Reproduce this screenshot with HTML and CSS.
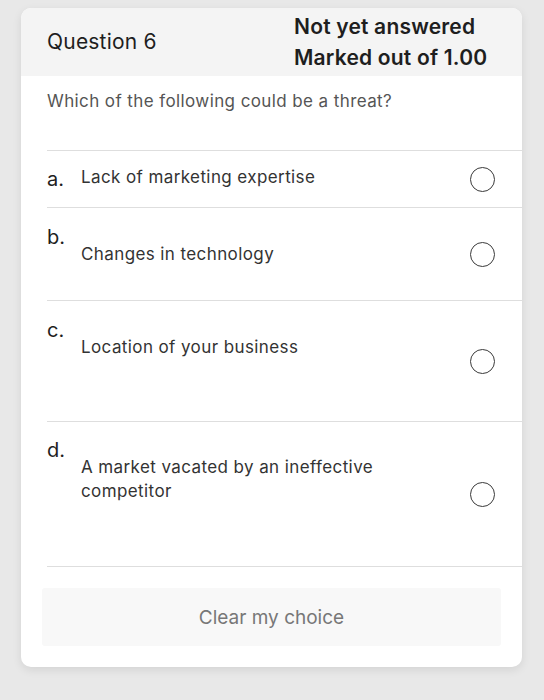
FILE: index.html
```html
<!DOCTYPE html>
<html lang="en">
<head>
<meta charset="utf-8">
<title>Question 6</title>
<link rel="stylesheet" href="styles.css">
</head>
<body>
<div class="card">
  <div class="card-header">
    <div class="q-title">Question 6</div>
    <div class="q-info">
      <div>Not yet answered</div>
      <div>Marked out of 1.00</div>
    </div>
  </div>
  <div class="q-text">Which of the following could be a threat?</div>
  <div class="answers">
    <div class="answer">
      <div class="answer-label inline answer-a">
        <span class="letter">a.</span>
        <span class="answer-text">Lack of marketing expertise</span>
      </div>
      <span class="radio"></span>
    </div>
    <div class="answer">
      <div class="answer-label answer-b">
        <div class="letter">b.</div>
        <div class="answer-text">Changes in technology</div>
      </div>
      <span class="radio"></span>
    </div>
    <div class="answer">
      <div class="answer-label answer-c">
        <div class="letter">c.</div>
        <div class="answer-text">Location of your business</div>
      </div>
      <span class="radio"></span>
    </div>
    <div class="answer">
      <div class="answer-label answer-d">
        <div class="letter">d.</div>
        <div class="answer-text">A market vacated by an ineffective competitor</div>
      </div>
      <span class="radio"></span>
    </div>
  </div>
  <div class="clear-btn">Clear my choice</div>
</div>
</body>
</html>
```

FILE: styles.css
```css
html, body {
  margin: 0;
  padding: 0;
  background: #e8e8e8;
  font-family: Inter, "Liberation Sans", Arial, sans-serif;
}

body {
  padding-top: 8px;
  padding-left: 21px;
  min-height: 700px;
  box-sizing: border-box;
}

.card {
  width: 501px;
  background: #ffffff;
  border-radius: 10px;
  overflow: hidden;
  box-shadow: 0 3px 10px rgba(0, 0, 0, 0.09);
  padding-bottom: 21px;
}

.card-header {
  background: #f4f4f4;
  height: 68px;
  display: grid;
  grid-template-columns: 247px 1fr;
  align-items: center;
  padding-left: 26px;
}

.q-title {
  font-size: 21px;
  letter-spacing: 0.2px;
  color: #1e1e1e;
  line-height: 24px;
}

.q-info {
  font-size: 21px;
  font-weight: 600;
  letter-spacing: 0.2px;
  color: #1e1e1e;
  line-height: 31px;
}

.q-text {
  font-size: 17px;
  letter-spacing: 0.4px;
  line-height: 24px;
  color: #555555;
  padding: 13px 26px 37px 26px;
}

.answers {
  margin-left: 26px;
  border-bottom: 1px solid #dedede;
}

.answer {
  border-top: 1px solid #dedede;
  display: flex;
  align-items: center;
  justify-content: space-between;
  padding-right: 27px;
}

.answer-label {
  flex: 1;
}

.answer-a { padding-top: 14px; padding-bottom: 14px; }
.answer-b { padding-top: 24px; padding-bottom: 34px; }
.answer-c { padding-top: 24px; padding-bottom: 62px; }
.answer-d { padding-top: 23px; padding-bottom: 63px; }

.answer-label.inline {
  display: flex;
  align-items: flex-start;
}

.letter {
  font-size: 20px;
  line-height: 10px;
  color: #1e1e1e;
}

.answer-label.inline .letter {
  line-height: 28px;
  width: 34px;
}

.answer-text {
  font-size: 17px;
  letter-spacing: 0.4px;
  line-height: 24px;
  color: #333333;
  padding-left: 34px;
  max-width: 345px;
}

.answer-label.inline .answer-text {
  padding-left: 0;
}

.radio {
  width: 25px;
  height: 25px;
  box-sizing: border-box;
  border: 1.6px solid #3a3a3a;
  border-radius: 50%;
  flex: none;
}

.clear-btn {
  margin: 21px 21px 0 21px;
  height: 58px;
  background: #f8f8f8;
  border-radius: 3px;
  display: flex;
  align-items: center;
  justify-content: center;
  font-size: 19px;
  color: #777777;
}
```
